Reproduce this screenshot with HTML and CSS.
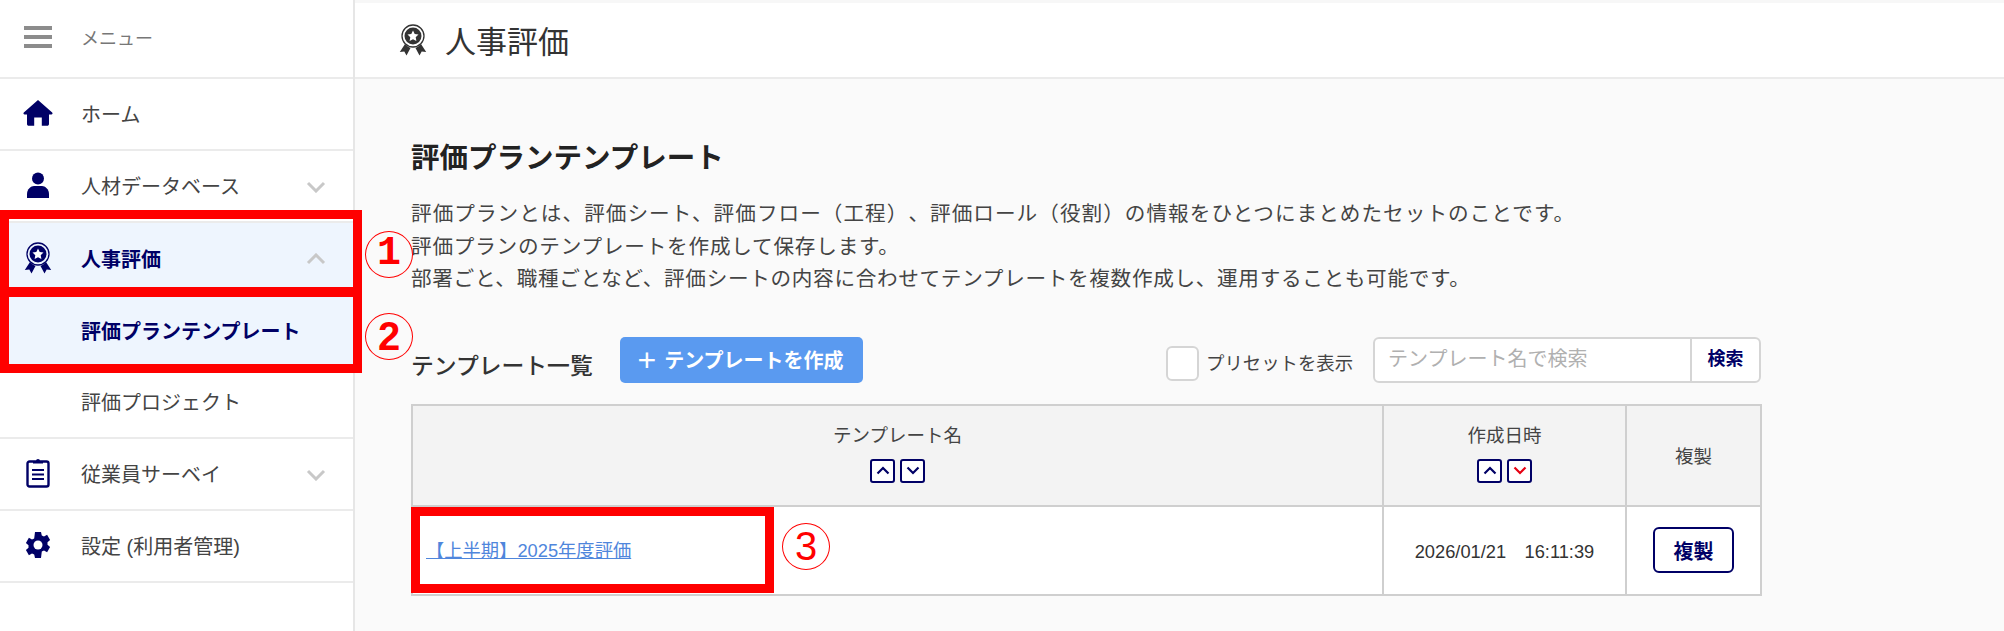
FILE: index.html
```html
<!DOCTYPE html>
<html lang="ja">
<head>
<meta charset="utf-8">
<title>人事評価</title>
<link rel="stylesheet" href="styles.css">
</head>
<body>
<div class="app">
  <aside class="sidebar">
    <div class="nav-row nav-menu">
      <span class="nav-icon"><svg class="ico-burger" width="30" height="22" viewBox="0 0 30 22"><path d="M1 0h28v4H1zM1 9h28v4H1zM1 18h28v4H1z" fill="#8c8c8c"/></svg></span>
      <span class="nav-label nav-label-small">メニュー</span>
    </div>
    <div class="nav-row">
      <span class="nav-icon"><svg width="30" height="28" viewBox="0 0 30 28"><path d="M15 1 0.8 13.6c-.8.8-.2 2 .8 2H4V25c0 1 .8 1.8 1.8 1.8h5.4V18.500h7.600V26.800h5.400c1 0 1.800-.8 1.800-1.800V15.600h2.400c1 0 1.600-1.200.8-2z" fill="#000066"/></svg></span>
      <span class="nav-label">ホーム</span>
    </div>
    <div class="nav-row">
      <span class="nav-icon"><svg width="24" height="26" viewBox="0 0 24 26"><circle cx="12" cy="6.500" r="6" fill="#000066"/><path d="M1 26v-4c0-5 4-8 7-8h8c3 0 7 3 7 8v4z" fill="#000066"/></svg></span>
      <span class="nav-label">人材データベース</span>
      <svg class="chev" width="20" height="12" viewBox="0 0 20 12"><path d="M2 2l8 8 8-8" fill="none" stroke="#c8c8c8" stroke-width="3"/></svg>
    </div>
    <div class="nav-row nav-active">
      <span class="nav-icon"><svg width="28" height="32" viewBox="0 0 28 32"><circle cx="14" cy="12" r="11" fill="none" stroke="#000066" stroke-width="1.300"/><circle cx="14" cy="12" r="8.500" fill="#000066"/><path d="M14 6.500l1.700 3.500 3.800.5-2.800 2.700.7 3.800-3.400-1.800-3.400 1.800.7-3.800-2.800-2.700 3.800-.5z" fill="#fff"/><path d="M6 20 0.800 28l4.500-.6 2.200 4 4-7.400a12 12 0 0 1-5.500-4zM22 20l5.200 8-4.500-.6-2.200 4-4-7.400a12 12 0 0 0 5.500-4z" fill="#000066"/></svg></span>
      <span class="nav-label nav-strong">人事評価</span>
      <svg class="chev" width="20" height="12" viewBox="0 0 20 12"><path d="M2 10l8-8 8 8" fill="none" stroke="#c8c8c8" stroke-width="3"/></svg>
    </div>
    <div class="nav-row nav-active nav-sub">
      <span class="nav-icon"></span>
      <span class="nav-label nav-strong">評価プランテンプレート</span>
    </div>
    <div class="nav-row">
      <span class="nav-icon"></span>
      <span class="nav-label">評価プロジェクト</span>
    </div>
    <div class="nav-row">
      <span class="nav-icon"><svg width="24" height="30" viewBox="0 0 24 30"><rect x="1.500" y="3.500" width="21" height="25" rx="2" fill="#fff" stroke="#000066" stroke-width="2.400"/><path d="M7 5V3h3a2 2 0 0 1 4 0h3v2.500H7z" fill="#000066"/><path d="M6 12h12M6 16.500h12M6 21h12" stroke="#000066" stroke-width="1.800"/></svg></span>
      <span class="nav-label">従業員サーベイ</span>
      <svg class="chev" width="20" height="12" viewBox="0 0 20 12"><path d="M2 2l8 8 8-8" fill="none" stroke="#c8c8c8" stroke-width="3"/></svg>
    </div>
    <div class="nav-row">
      <span class="nav-icon"><svg width="28" height="28" viewBox="0 0 28 28"><path d="M11 1h6l.8 3.400 2.200 1 3.100-1.700 3 5.200-2.600 2.400v2.400l2.600 2.400-3 5.200-3.100-1.700-2.200 1L17 27h-6l-.8-3.400-2.200-1-3.100 1.700-3-5.200 2.600-2.400v-2.400L1.900 11.900l3-5.200L8 8.400l2.200-1z" fill="#000066"/><circle cx="14" cy="14" r="4.500" fill="#fff"/></svg></span>
      <span class="nav-label">設定 (利用者管理)</span>
    </div>
  </aside>

  <main class="main">
    <header class="page-header">
      <svg width="28" height="32" viewBox="0 0 28 32"><circle cx="14" cy="12" r="11" fill="none" stroke="#333" stroke-width="1.300"/><circle cx="14" cy="12" r="8.500" fill="#333"/><path d="M14 6.500l1.700 3.500 3.800.5-2.800 2.700.7 3.800-3.400-1.800-3.400 1.800.7-3.800-2.800-2.700 3.800-.5z" fill="#fff"/><path d="M6 20 0.800 28l4.500-.6 2.200 4 4-7.400a12 12 0 0 1-5.500-4zM22 20l5.200 8-4.500-.6-2.200 4-4-7.400a12 12 0 0 0 5.500-4z" fill="#333"/></svg>
      <h1 class="page-title">人事評価</h1>
    </header>
    <div class="content">
      <h2 class="section-title">評価プランテンプレート</h2>
      <p class="intro">
        <span class="intro-line intro-line-1">評価プランとは、評価シート、評価フロー（工程）、評価ロール（役割）の情報をひとつにまとめたセットのことです。</span>
        <span class="intro-line intro-line-2">評価プランのテンプレートを作成して保存します。</span>
        <span class="intro-line intro-line-3">部署ごと、職種ごとなど、評価シートの内容に合わせてテンプレートを複数作成し、運用することも可能です。</span>
      </p>
      <div class="toolbar">
        <span class="list-title">テンプレート一覧</span>
        <button class="btn-create"><span class="plus">+</span>テンプレートを作成</button>
        <span class="check"></span>
        <span class="check-label">プリセットを表示</span>
        <div class="search">
          <span class="search-input">テンプレート名で検索</span>
          <span class="search-btn">検索</span>
        </div>
      </div>
      <table class="grid">
        <thead>
          <tr>
            <th class="col-name">テンプレート名
              <div class="sort">
                <span class="sort-btn"><svg width="14" height="9" viewBox="0 0 14 9"><path d="M1.500 7.500 7 2l5.500 5.500" fill="none" stroke="#000066" stroke-width="2.200"/></svg></span>
                <span class="sort-btn"><svg width="14" height="9" viewBox="0 0 14 9"><path d="M1.500 1.500 7 7l5.500-5.500" fill="none" stroke="#000066" stroke-width="2.200"/></svg></span>
              </div>
            </th>
            <th class="col-date">作成日時
              <div class="sort">
                <span class="sort-btn"><svg width="14" height="9" viewBox="0 0 14 9"><path d="M1.500 7.500 7 2l5.500 5.500" fill="none" stroke="#000066" stroke-width="2.200"/></svg></span>
                <span class="sort-btn"><svg width="14" height="9" viewBox="0 0 14 9"><path d="M1.500 1.500 7 7l5.500-5.500" fill="none" stroke="#e60012" stroke-width="2.200"/></svg></span>
              </div>
            </th>
            <th class="col-copy">複製</th>
          </tr>
        </thead>
        <tbody>
          <tr>
            <td class="cell-name"><a class="plan-link" href="#">【上半期】2025年度評価</a></td>
            <td class="cell-date">2026/01/21　16:11:39</td>
            <td class="cell-copy"><button class="btn-copy">複製</button></td>
          </tr>
        </tbody>
      </table>
    </div>
  </main>
</div>

<div class="mark mark-1"></div>
<div class="mark mark-2"></div>
<div class="mark mark-3"></div>
<span class="num num-1">1</span>
<span class="num num-2">2</span>
<span class="num num-3">3</span>
</body>
</html>
```
FILE: styles.css
```css
* { box-sizing: border-box; }
html, body { margin: 0; padding: 0; height: 100%; }
body {
  position: relative;
  overflow: hidden;
  background: #fafafa;
  color: #333;
  font-family: "Liberation Sans", "Noto Sans CJK JP", sans-serif;
  text-spacing-trim: space-all;
}
.app { display: flex; height: 631px; }

.sidebar {
  width: 355px;
  flex: none;
  background: #fff;
  border-right: 2px solid #e6e6e6;
  padding-left: 4px;
}
.nav-row {
  display: flex;
  align-items: center;
  height: 72px;
  margin-left: -4px;
  padding-left: 4px;
  padding-bottom: 2px;
  position: relative;
  border-bottom: 2px solid #ebebeb;
  background-clip: padding-box;
}
.nav-menu { height: 79px; padding-bottom: 4px; }
.nav-sub { border-bottom: 0; }
.nav-active { background: #eef5fe; border-bottom: 0; }
.nav-icon {
  width: 67px;
  flex: none;
  display: flex;
  justify-content: center;
}
.nav-label { font-size: 20px; color: #444; margin-left: 10px; }
.nav-label-small { font-size: 18px; color: #777; }
.nav-strong { font-weight: 700; color: #000066; }
.chev { position: absolute; left: 306px; top: 30px; }

.main { flex: 1; min-width: 0; }
.page-header {
  height: 79px;
  background: #fff;
  border-top: 3px solid #f7f7f7;
  border-bottom: 2px solid #ebebeb;
  display: flex;
  align-items: center;
  padding-left: 44px;
  gap: 18px;
}
.page-title { margin: 0 0 2px; font-size: 31px; font-weight: 400; color: #333; }

.content { padding: 59px 243px 0 56px; }
.section-title { margin: 0; font-size: 28.500px; line-height: 40px; font-weight: 700; color: #222; }
.intro { margin: 20px 0 0; font-size: 20.600px; line-height: 32.500px; color: #444; }
.intro-line { display: block; white-space: nowrap; }
.intro-line-1 { letter-spacing: 1.050px; }
.intro-line-2 { letter-spacing: 0.800px; }
.intro-line-3 { letter-spacing: 0.700px; }

.toolbar { display: flex; align-items: center; height: 46px; margin-top: 41px; }
.list-title { font-size: 22.800px; font-weight: 500; color: #333; width: 209px; padding-top: 9px; }
.btn-create {
  width: 243px;
  height: 46px;
  border: 0;
  border-radius: 5px;
  background: #5a9af0;
  color: #fff;
  font: 700 20px "Liberation Sans", "Noto Sans CJK JP", sans-serif;
  padding: 0 2px 0 0;
}
.plus { font-weight: 400; font-size: 32px; margin-right: 8px; line-height: 1; vertical-align: -3px; }
.check {
  width: 33px;
  height: 35px;
  margin-left: 303px;
  margin-top: 7px;
  border: 2px solid #d5d5d5;
  border-radius: 6px;
  background: #fff;
}
.check-label { margin-left: 7px; font-size: 18.400px; color: #444; padding-top: 5px; width: 167px; }
.search {
  display: flex;
  width: 388px;
  height: 46px;
  border: 2px solid #d5d5d5;
  border-radius: 6px;
  background: #fff;
}
.search-input { flex: 1; padding-left: 13px; font-size: 20px; line-height: 40px; color: #b0b0b0; }
.search-btn {
  width: 69px;
  border-left: 2px solid #d5d5d5;
  text-align: center;
  font-size: 18px;
  font-weight: 700;
  line-height: 40px;
  color: #000066;
}

.grid {
  border-collapse: collapse;
  width: 1349px;
  margin-top: 21px;
  table-layout: fixed;
  border: 2px solid #cfcfcf;
}
.grid th, .grid td { border: 2px solid #cfcfcf; text-align: center; padding: 0; }
.grid th {
  background: #f3f3f3;
  height: 101px;
  font-size: 18.500px;
  font-weight: 400;
  color: #444;
}
.grid td { height: 89px; background: #fff; font-size: 18.300px; color: #333; }
.col-name { width: 971px; }
.col-date { width: 243px; }
.col-copy { width: 135px; }
.grid .cell-name { text-align: left; padding-left: 13px; padding-bottom: 2px; }
.plan-link { color: #4f86dc; text-decoration: underline; }
.sort { display: flex; justify-content: center; gap: 5px; margin: 12px 0 7px; }
.sort-btn {
  width: 25px;
  height: 24px;
  border: 2px solid #000066;
  border-radius: 3px;
  background: #fff;
  display: flex;
  align-items: center;
  justify-content: center;
}
.btn-copy {
  width: 81px;
  height: 46px;
  border: 2px solid #000066;
  border-radius: 6px;
  background: #fff;
  color: #000066;
  font: 700 20px "Liberation Sans", "Noto Sans CJK JP", sans-serif;
  padding: 0;
}

.mark { position: absolute; border: 9px solid #ff0000; }
.mark-1 { left: 0; top: 210px; width: 362px; height: 86px; }
.mark-2 { left: 0; top: 288px; width: 362px; height: 85px; }
.mark-3 { left: 411px; top: 507px; width: 363px; height: 86px; }
.num {
  position: absolute;
  width: 48px;
  height: 47px;
  border: 1.500px solid #ff0000;
  border-radius: 50%;
  color: #ff0000;
  font-size: 40px;
  font-weight: 700;
  line-height: 44px;
  text-align: center;
}
.num-1 { left: 365px; top: 231px; font-family: "Liberation Mono", monospace; }
.num-2 { left: 365px; top: 313px; }
.num-3 { left: 782px; top: 523px; font-weight: 400; }
```
